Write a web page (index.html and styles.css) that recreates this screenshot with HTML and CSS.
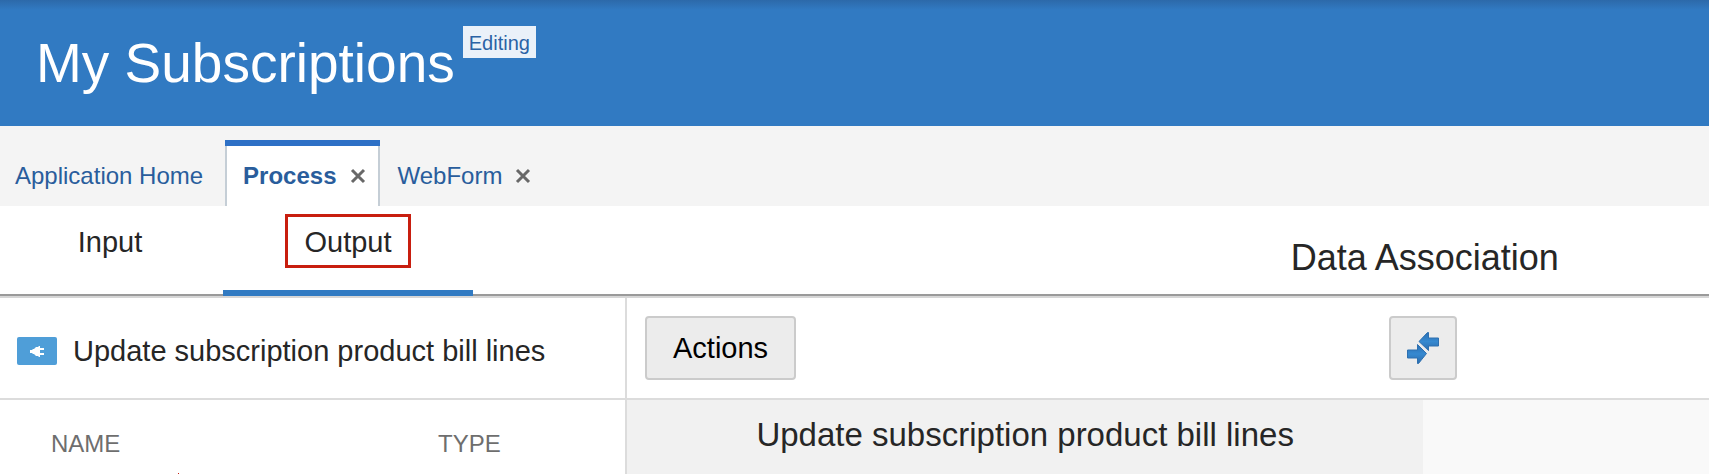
FILE: index.html
```html
<!DOCTYPE html>
<html lang="en">
<head>
<meta charset="utf-8">
<title>My Subscriptions</title>
<link rel="stylesheet" href="styles.css">
</head>
<body>
<header class="banner">
  <h1 class="banner-title">My Subscriptions</h1>
  <span class="badge">Editing</span>
</header>
<nav class="tabs" aria-label="Open components">
  <div class="tab tab-home"><a href="#home">Application Home</a></div>
  <div class="tab tab-active">
    <a href="#process">Process</a>
    <button class="close" type="button" aria-label="Close Process"><svg viewBox="0 0 16 16"><path d="M2 2 14 14M14 2 2 14"/></svg></button>
  </div>
  <div class="tab">
    <a href="#webform">WebForm</a>
    <button class="close" type="button" aria-label="Close WebForm"><svg viewBox="0 0 16 16"><path d="M2 2 14 14M14 2 2 14"/></svg></button>
  </div>
</nav>
<section class="subnav">
  <button class="mode mode-input" type="button"><span class="mode-label">Input</span></button>
  <button class="mode mode-output" type="button"><span class="mode-label mode-marked">Output</span></button>
  <div class="subnav-rest"><h2 class="subnav-title">Data Association</h2></div>
</section>
<main class="work">
  <section class="source">
    <div class="source-head">
      <svg class="plug" viewBox="0 0 40 28"><rect width="40" height="28" rx="2" fill="#4f9ed8"/><path fill="#fff" d="M13 13h2l1-1h1l2-2h2l1-1h1v2h4v2h-4v3h4v2h-4v2h-1l-1-1h-2l-2-2h-1l-1-1h-2z"/></svg>
      <h3 class="source-title">Update subscription product bill lines</h3>
    </div>
    <table class="fields">
      <thead><tr><th class="col-name">NAME</th><th class="col-type">TYPE</th></tr></thead>
    </table>
    <span class="mark"></span>
  </section>
  <section class="mapping">
    <div class="mapping-inner">
      <div class="toolbar">
        <button class="btn btn-actions" type="button">Actions</button>
        <button class="btn btn-map" type="button" aria-label="Map">
          <svg viewBox="0 0 32 32"><defs><linearGradient id="arrow" x1="0" y1="0" x2="0" y2="1"><stop offset="0" stop-color="#2b6fb3"/><stop offset=".5" stop-color="#3689d0"/><stop offset="1" stop-color="#2b6cad"/></linearGradient></defs><path class="arrow" d="M12 9.500 20.500.5h1v5.500h10v8h-10v4.500z"/><path class="arrow" d="M.5 18h10v-5.500l9 9-8 10h-1V26H.5z"/></svg>
        </button>
      </div>
      <div class="targets">
        <h3 class="target-title">Update subscription product bill lines</h3>
        <div class="target-rest"></div>
      </div>
    </div>
  </section>
</main>
</body>
</html>
```
FILE: styles.css
```css
* { box-sizing: border-box; }

body {
  margin: 0;
  min-height: 100vh;
  display: flex;
  flex-direction: column;
  overflow-x: hidden;
  background: #fff;
  color: #262626;
  font-family: "Liberation Sans", Arial, sans-serif;
}

h1, h2, h3 { margin: 0; font-weight: 400; white-space: nowrap; }
button { font: inherit; color: inherit; padding: 0; border: 0; background: none; cursor: pointer; }
svg { display: block; }

.banner {
  display: flex;
  align-items: flex-start;
  gap: 8px;
  padding: 26px 36px;
  background: linear-gradient(#2c69a9, #317ac2 10px);
}
.banner-title { color: #fff; font-size: 55px; line-height: 74px; }
.badge { padding: 0 6px; background: #eaf1f9; color: #2a62a5; font-size: 20px; line-height: 34px; height: 32px; }

.tabs { display: flex; padding: 14px 0 0 15px; background: #f4f4f4; }
.tab {
  display: flex;
  align-items: center;
  gap: 13px;
  padding: 6px 18px 0;
  font-size: 24px;
  line-height: 60px;
}
.tab a { color: #295d9c; text-decoration: none; }
.tab-home { padding: 6px 22px 0 0; }
.tab-active {
  position: relative;
  padding: 6px 12px 0 16px;
  border: solid #c5ced6;
  border-width: 0 2px;
  background: #fff;
  font-weight: 700;
}
.tab-active::before { content: ""; position: absolute; top: 0; left: -2px; right: -2px; height: 6px; background: #2d70c6; }
.close svg { width: 16px; height: 16px; fill: none; stroke: #686868; stroke-width: 3; }

.subnav { display: flex; border-bottom: 2px solid #9a9a9a; box-shadow: 0 2px 0 #d6d6d6; position: relative; }
.mode { display: flex; justify-content: center; align-items: flex-start; height: 90px; margin-bottom: -2px; padding-top: 8px; font-size: 29px; border-bottom: 6px solid transparent; }
.mode-input { width: 223px; padding-right: 3px; }
.mode-output { width: 250px; border-bottom-color: #317ac2; }
.mode-label { padding: 5px 16px 3px; line-height: 46px; }
.mode-marked { padding: 2px 16px 0; border: 3px solid #c81e0f; }
.subnav-rest { flex: 1; min-width: 0; overflow: hidden; }
.subnav-title { width: 154%; padding-top: 16px; text-align: center; font-size: 36px; line-height: 72px; }

.work { flex: 1; display: flex; padding-top: 2px; }
.source { position: relative; width: 627px; border-right: 2px solid #dcdcdc; }
.source-head { display: flex; align-items: center; gap: 16px; height: 102px; padding: 6px 17px 0; border-bottom: 2px solid #dcdcdc; }
.plug { width: 40px; height: 28px; flex: none; }
.source-title { font-size: 29px; line-height: 40px; }
.fields { width: 100%; table-layout: fixed; border-collapse: collapse; }
.fields th { padding: 14px 0 0; text-align: left; font-weight: 400; font-size: 24px; line-height: 60px; color: #6e6e6e; }
.fields .col-name { width: 438px; padding-left: 51px; }
.mark { position: absolute; left: 178px; bottom: 0; width: 1px; height: 1px; background: #c81e0f; }

.mapping { flex: 1; min-width: 0; overflow: hidden; display: flex; }
.mapping-inner { flex: none; width: 147.2%; display: flex; flex-direction: column; }
.toolbar { display: grid; grid-template-columns: 1fr auto 1fr; align-items: center; height: 102px; padding: 0 18px; border-bottom: 2px solid #dcdcdc; }
.btn { height: 64px; border: 2px solid #cbcbcb; border-radius: 4px; background: #ececec; color: #000; font-size: 29px; }
.btn-actions { justify-self: start; padding: 0 26px; }
.btn-map { padding: 0 16px; }
.btn-map svg { width: 32px; height: 32px; }
.arrow { fill: url(#arrow); stroke: #2e70b0; stroke-width: 1; }
.targets { flex: 1; display: grid; grid-template-columns: 1fr 1fr; }
.target-title { background: #f1f1f1; text-align: center; font-size: 33px; line-height: 70px; }
.target-rest { background: #f9f9f9; }
```
